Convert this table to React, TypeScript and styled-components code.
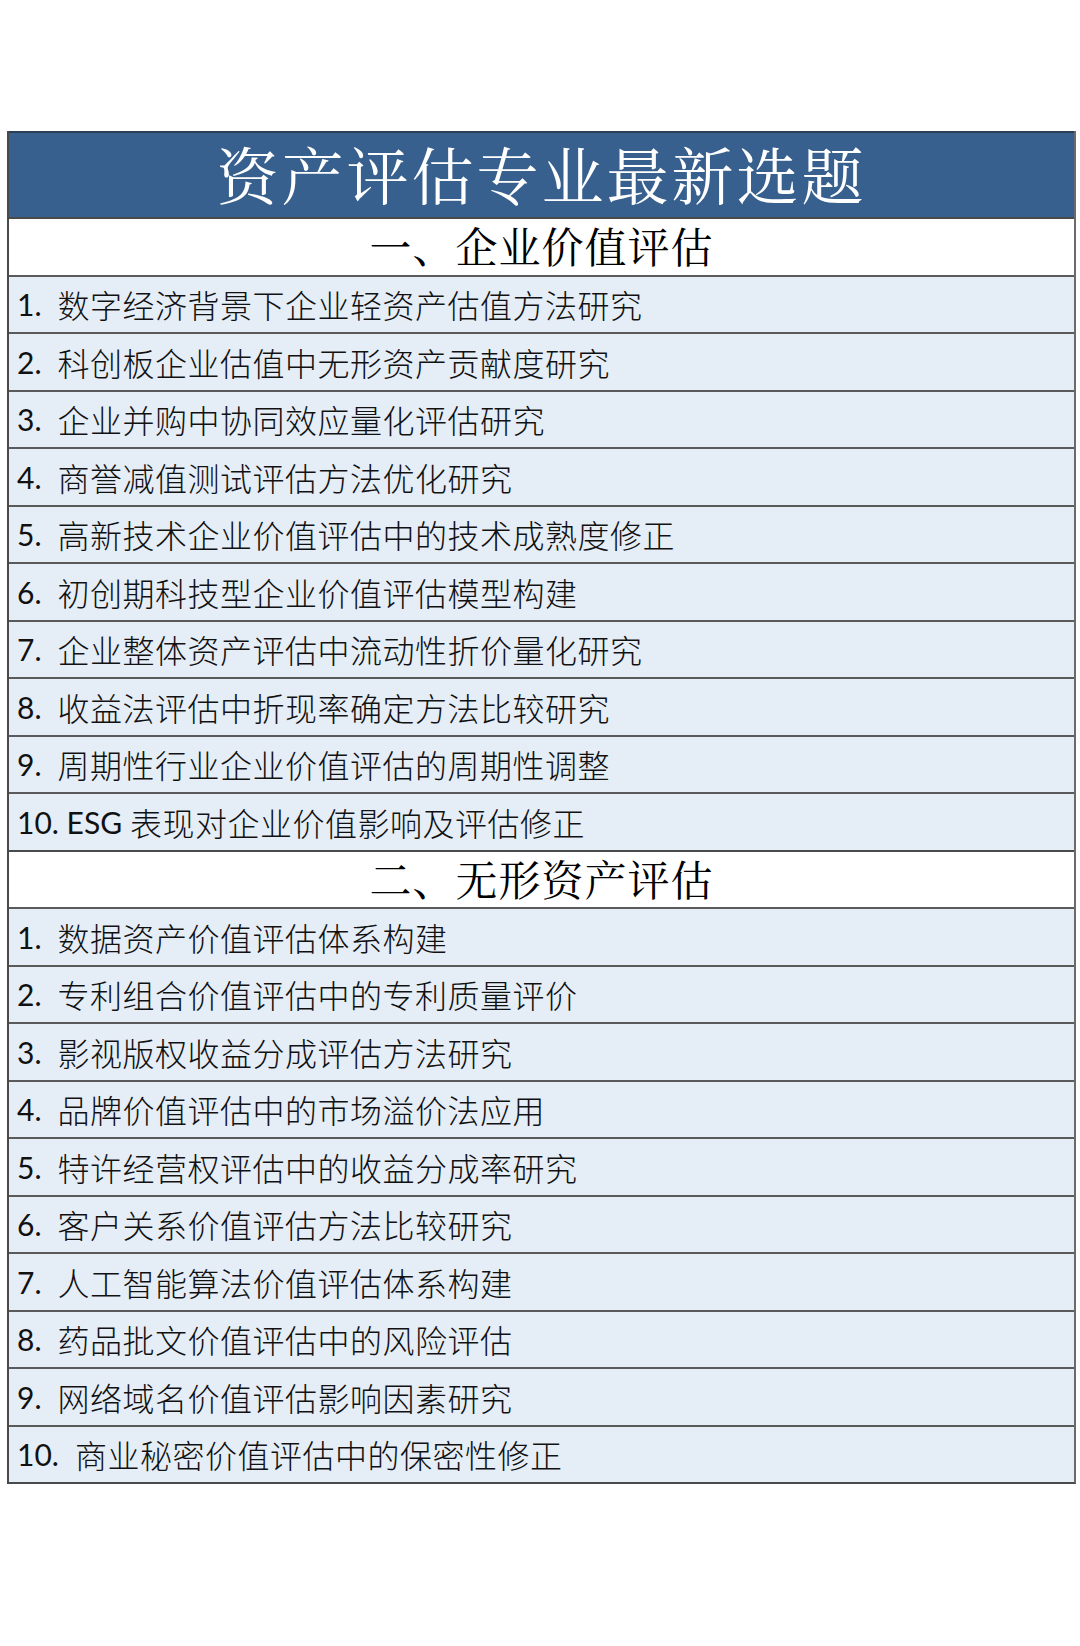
import React from "react";
import styled, { createGlobalStyle } from "styled-components";

const GlobalStyle = createGlobalStyle`
  html, body {
    margin: 0;
    padding: 0;
    background: #fff;
  }
  * {
    box-sizing: border-box;
  }
`;

const Page = styled.div`
  padding: 131px 4px 0 7px;
  min-height: 1646px;
  background: #fff;
`;

const Sheet = styled.div`
  width: 1069px;
  border-left: 2px solid #4a4a4a;
  border-right: 2px solid #6a6a6a;
  border-bottom: 2px solid #4a4a4a;
  display: flex;
  flex-direction: column;
`;

const Title = styled.div`
  height: 86px;
  background: #37608f;
  border-top: 2px solid #2c3e55;
  display: flex;
  align-items: center;
  justify-content: center;
  color: #fff;
  font-family: "Noto Serif CJK SC", "Noto Sans CJK SC", serif;
  font-size: 62px;
  font-weight: 400;
  letter-spacing: 3px;
  line-height: 1;
  padding-bottom: 2px;
`;

const SectionRow = styled.div`
  height: 57.5px;
  background: #fff;
  border-top: 2px solid #4a4a4a;
  display: flex;
  align-items: center;
  justify-content: center;
  color: #000;
  font-family: "Noto Serif CJK SC", "Noto Sans CJK SC", serif;
  font-size: 42px;
  line-height: 1;
  letter-spacing: 1px;
  padding-bottom: 3px;
`;

const ItemRow = styled.div`
  height: 57.5px;
  background: #e5edf7;
  border-top: 2px solid #5a5a5a;
  display: flex;
  align-items: center;
  padding: 0 0 0 8px;
  color: #111;
  line-height: 1;
`;

const Num = styled.span<{ $gap: number }>`
  font-family: Lato, "Liberation Sans", sans-serif;
  font-size: 30px;
  margin-right: ${(p) => p.$gap}px;
  white-space: pre;
`;

const Topic = styled.span`
  font-family: "Noto Sans CJK SC", sans-serif;
  font-size: 32px;
  font-weight: 300;
  letter-spacing: 0.5px;
`;

const sections = [
  {
    heading: "一、企业价值评估",
    items: [
      "数字经济背景下企业轻资产估值方法研究",
      "科创板企业估值中无形资产贡献度研究",
      "企业并购中协同效应量化评估研究",
      "商誉减值测试评估方法优化研究",
      "高新技术企业价值评估中的技术成熟度修正",
      "初创期科技型企业价值评估模型构建",
      "企业整体资产评估中流动性折价量化研究",
      "收益法评估中折现率确定方法比较研究",
      "周期性行业企业价值评估的周期性调整",
      "ESG 表现对企业价值影响及评估修正",
    ],
  },
  {
    heading: "二、无形资产评估",
    items: [
      "数据资产价值评估体系构建",
      "专利组合价值评估中的专利质量评价",
      "影视版权收益分成评估方法研究",
      "品牌价值评估中的市场溢价法应用",
      "特许经营权评估中的收益分成率研究",
      "客户关系价值评估方法比较研究",
      "人工智能算法价值评估体系构建",
      "药品批文价值评估中的风险评估",
      "网络域名价值评估影响因素研究",
      "商业秘密价值评估中的保密性修正",
    ],
  },
];

const App = () => {
  return (
    <Page>
      <GlobalStyle />
      <Sheet>
        <Title>资产评估专业最新选题</Title>
        {sections.map((section) => (
          <React.Fragment key={section.heading}>
            <SectionRow>{section.heading}</SectionRow>
            {section.items.map((item, i) => {
              const esg = item.startsWith("ESG");
              return (
                <ItemRow key={item}>
                  <Num $gap={esg ? 0 : 16}>{`${i + 1}.`}</Num>
                  {esg ? (
                    <>
                      <Num $gap={8}>{" ESG"}</Num>
                      <Topic>{item.slice(4)}</Topic>
                    </>
                  ) : (
                    <Topic>{item}</Topic>
                  )}
                </ItemRow>
              );
            })}
          </React.Fragment>
        ))}
      </Sheet>
    </Page>
  );
};

export default App;
